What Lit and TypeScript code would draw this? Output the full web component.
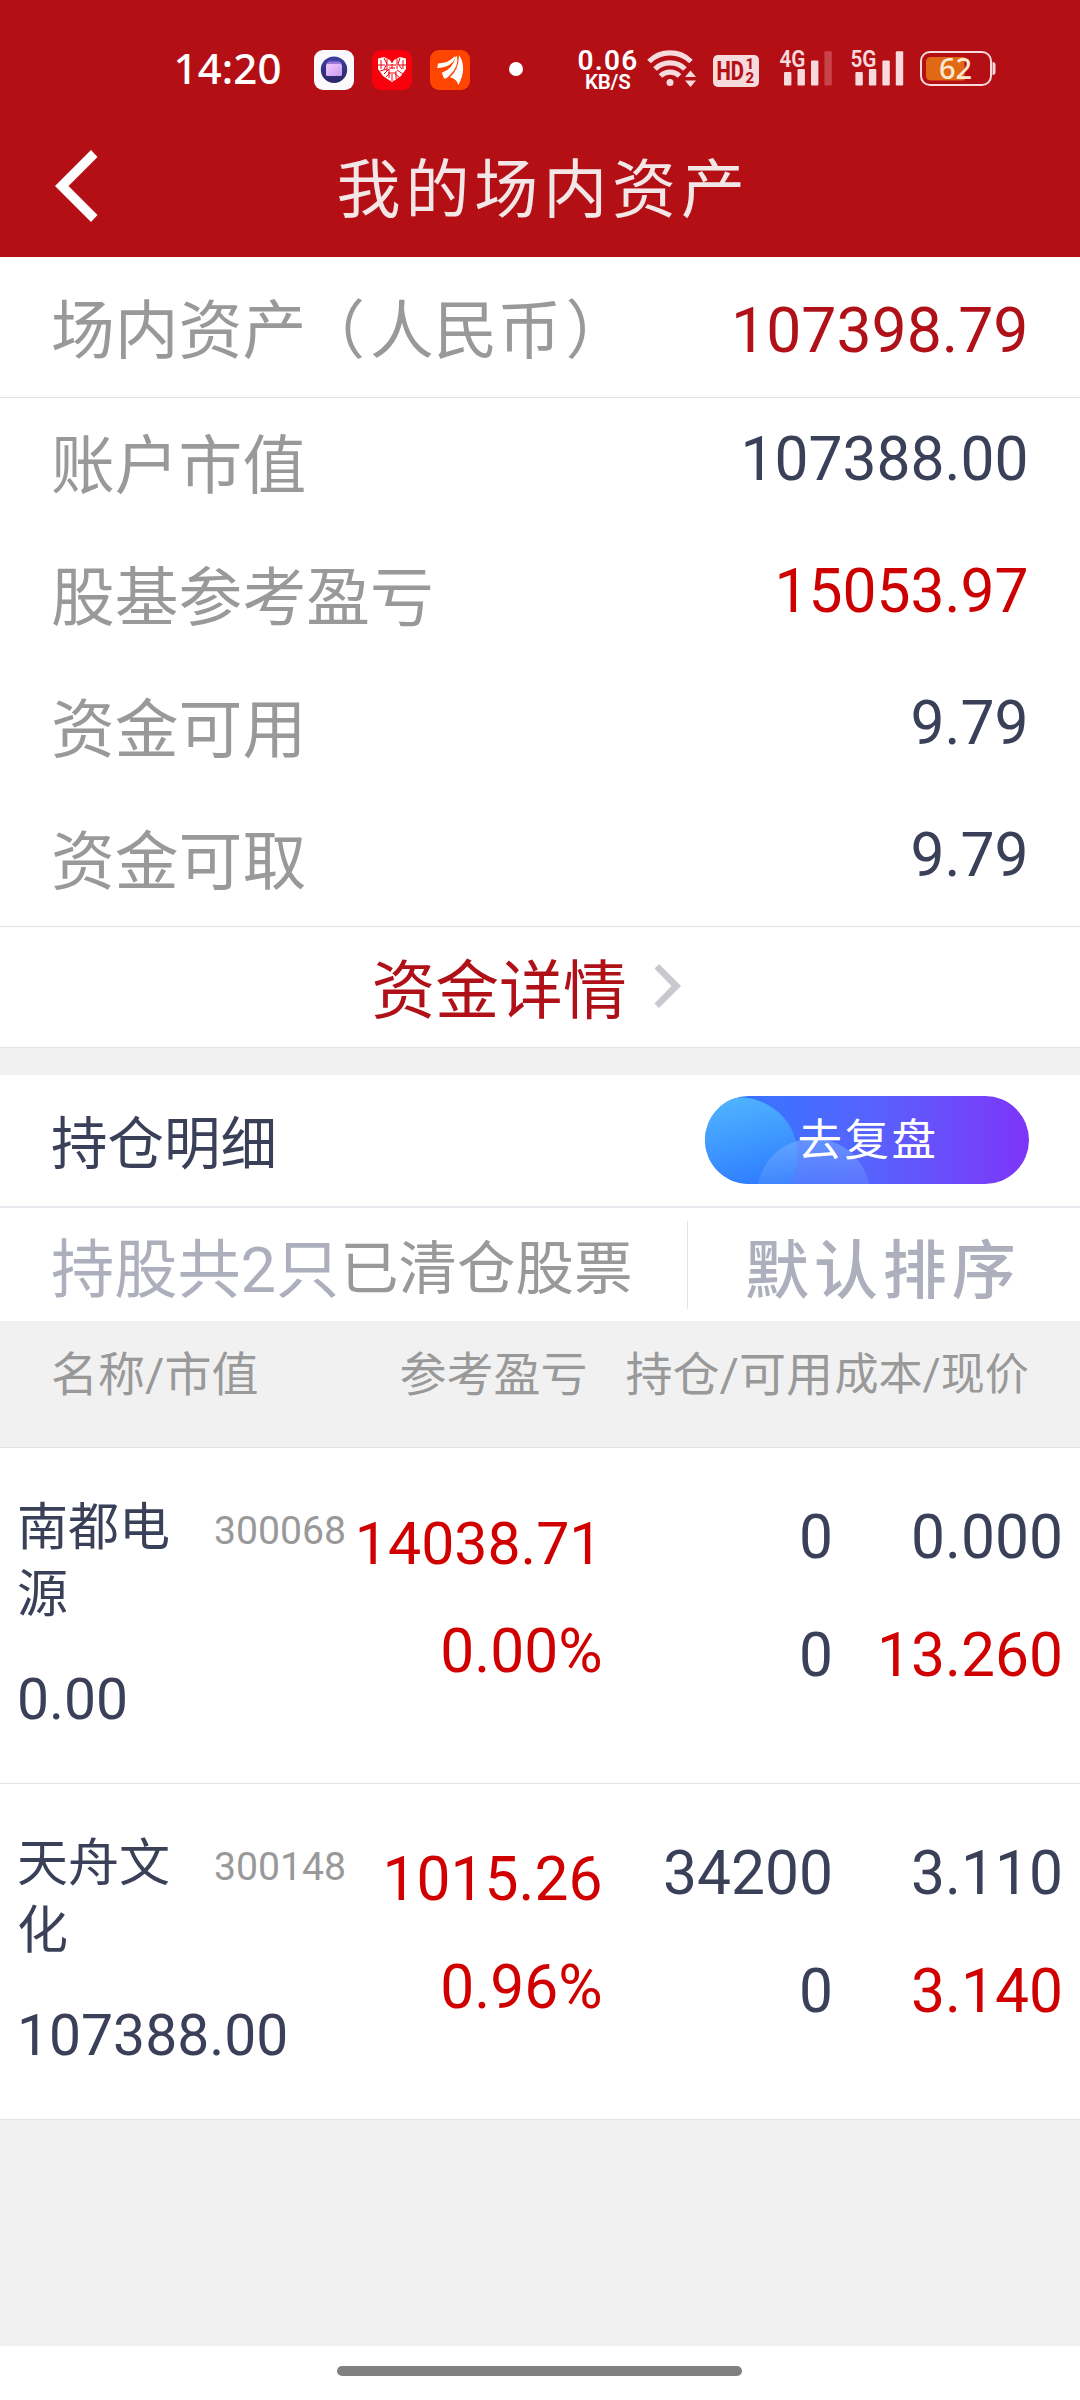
import { LitElement, html, css, svg } from "lit";
import { customElement, property } from "lit/decorators.js";

interface Holding {
  name: string;
  code: string;
  value: string;
  profit: string;
  rate: string;
  held: string;
  usable: string;
  cost: string;
  price: string;
  tight?: boolean;
}

const FONT = css`Roboto, "Noto Sans CJK SC", sans-serif`;

const SUMMARY = [
  { label: "账户市值", value: "107388.00", up: false },
  { label: "股基参考盈亏", value: "15053.97", up: true },
  { label: "资金可用", value: "9.79", up: false },
  { label: "资金可取", value: "9.79", up: false },
];

const HOLDINGS: Holding[] = [
  {
    name: "南都电源", code: "300068", value: "0.00", profit: "14038.71", rate: "0.00%",
    held: "0", usable: "0", cost: "0.000", price: "13.260", tight: true,
  },
  {
    name: "天舟文化", code: "300148", value: "107388.00", profit: "1015.26", rate: "0.96%",
    held: "34200", usable: "0", cost: "3.110", price: "3.140",
  },
];

@customElement("status-bar")
export class StatusBar extends LitElement {
  static styles = css`
    :host { display: block; height: 114px; }
    svg { display: block; }
    .os { font-family: "Noto Sans", sans-serif; fill: #fff; }
    .rb { font-family: Roboto, sans-serif; }
    .charge { fill: #fde9d2; }
  `;

  private bars(x: number, last: string) {
    return svg`
      <g fill="#f7dadc">
        <rect x=${x} y="72" width="7.4" height="13.6" rx="1"/>
        <rect x=${x + 13.5} y="69" width="7.4" height="16.6" rx="1"/>
        <rect x=${x + 27} y="60.5" width="7.4" height="25.1" rx="1"/>
        <rect x=${x + 40.4} y="51.3" width="7.4" height="34.3" rx="1" fill=${last}/>
      </g>`;
  }

  render() {
    return html`
      <svg width="1080" height="114" viewBox="0 0 1080 114">
        <defs>
          <linearGradient id="navy" x1="0" y1="0" x2="0" y2="1">
            <stop offset="0" stop-color="#3a3f9c"/><stop offset="1" stop-color="#2b2766"/>
          </linearGradient>
          <linearGradient id="pink" x1="0" y1="0" x2="1" y2="1">
            <stop offset="0" stop-color="#f3c8fb"/><stop offset="1" stop-color="#c79af0"/>
          </linearGradient>
        </defs>
        <text class="os" x="173.500" y="84" font-size="42" font-weight="500" textLength="108">14:20</text>

        <rect x="314" y="50" width="40" height="40" rx="9" fill="#fafafc"/>
        <circle cx="334" cy="69.7" r="13.2" fill="url(#navy)"/>
        <rect x="328" y="60.5" width="12" height="4" rx="1.5" fill="#6a55c0"/>
        <rect x="326.6" y="62" width="14.8" height="5" rx="1.5" fill="#9a78dc"/>
        <rect x="326" y="64" width="16" height="12" rx="1.5" fill="url(#pink)"/>

        <rect x="372" y="50" width="40" height="40" rx="9" fill="#f8000c"/>
        <path d="M378 58.5 L384 57 L390 60 L392 63.5 L394 60 L400 57 L406 58.5 V69 L401 76 L392 82 L383 76 L378 69Z" fill="#fff"/>
        <g stroke="#f8000c" stroke-width="1" fill="none">
          <path d="M381 60v9M384 58l3 6-3 5M387 59v12M378 65h7M380 71l7-2M384 74l5-5v9M388 73l8 0M392 74v7M396 71v8M397 70l6 4M397 59v10M400 58l-2 6 4 5M403 60v9M399 65h7M388 65h8M389 68h6M392 64v5M386 77l4-4M395 74l4 3"/>
        </g>

        <rect x="430" y="50" width="40" height="40" rx="9" fill="#ff4600"/>
        <path d="M438 67.5 L438.5 64 Q449 64 455 57 Q451 67 438 67.5Z
                 M442.5 73 Q453 70 456.5 56.5 Q458.500 66 449 75 Q446 78 444.500 78Z
                 M451 77 Q459 70 459.500 57 Q466 68 458.500 83.500 Q457 79 451 77Z" fill="#fff" stroke="#fff" stroke-width="1.200"/>

        <circle cx="516" cy="69" r="7" fill="#fff"/>

        <text class="rb" font-weight="600" fill="#fff"><tspan x="577.500" y="70" font-size="28" letter-spacing="1.300">0.06</tspan><tspan x="585" y="89" font-size="20.500" letter-spacing="-.2">KB/S</tspan></text>

        <g fill="none" stroke="#f7dadc" stroke-width="5.200">
          <path d="M649 61.500 A30 30 0 0 1 691 61.500"/>
          <path d="M655 69 A21.500 21.500 0 0 1 685 69"/>
          <path d="M660.500 76 A13.500 13.500 0 0 1 679.500 76"/>
        </g>
        <circle cx="670" cy="82.600" r="3.500" fill="#f7dadc"/>
        <path d="M685 77 L690.500 70.500 L696 77Z M685 80.500 H696 L690.500 87Z" fill="#f7dadc"/>

        <rect x="713" y="55" width="46" height="32" rx="5" fill="#f7dadc"/>
        <g class="rb" fill="#b50f16" font-weight="800">
          <text x="716.500" y="80" font-size="25" textLength="27.500" lengthAdjust="spacingAndGlyphs">HD</text>
          <text x="745.500" y="69" font-size="15">1</text>
          <text x="745.500" y="82.500" font-size="15">2</text>
        </g>

        <g class="rb" fill="#f7dadc" font-weight="600" font-size="24.500">
          <text x="779.500" y="66.500" textLength="26" lengthAdjust="spacingAndGlyphs">4G</text>
          <text x="850.500" y="66.500" textLength="26" lengthAdjust="spacingAndGlyphs">5G</text>
        </g>
        ${this.bars(784, "#c9434a")}
        ${this.bars(855.4, "#f7dadc")}

        <rect x="921" y="52" width="70" height="33" rx="9" fill="none" stroke="#f7dadc" stroke-width="2"/>
        <path d="M931 57 H964.500 V80.500 H931 Q926 80.500 926 75.500 V62 Q926 57 931 57Z" fill="#e06914"/>
        <path d="M992.500 62 Q995.500 62 995.500 65 V72 Q995.500 75 992.500 75Z" fill="#f7dadc"/>
        <text class="os charge" x="939" y="79" font-size="29" font-weight="500" textLength="33">62</text>
      </svg>`;
  }
}

@customElement("holding-row")
export class HoldingRow extends LitElement {
  @property({ attribute: false }) item!: Holding;

  static styles = css`
    :host {
      display: grid;
      grid-template-columns: 344px 258.500px 230.500px 230px 17px;
      height: 335px;
      border-bottom: 1px solid #e2e2e2;
      background: #fff;
      font-family: ${FONT};
      color: #3a4058;
      font-size: 60.5px;
      line-height: 60px;
      white-space: nowrap;
    }
    .ident { padding: 46px 0 0 17px; }
    .title { display: flex; align-items: flex-start; }
    .name { flex: none; width: 160px; font-size: 51px; line-height: 67px; white-space: normal; }
    .code { flex: none; font-size: 39.200px; line-height: 39px; color: #999; margin: 18px 0 0 37px; }
    .value { font-size: 57px; line-height: 57px; margin-top: 43px; }
    .col { display: flex; flex-direction: column; align-items: flex-end; padding-top: 60px; gap: 58px; }
    .pl { padding-top: 66px; gap: 48px; }
    .up { color: #d00000; }
    .tight { font-size: 59px; }
  `;

  render() {
    const h = this.item;
    return html`
      <div class="ident">
        <div class="title"><span class="name">${h.name}</span><span class="code">${h.code}</span></div>
        <div class="value">${h.value}</div>
      </div>
      <div class="col pl up"><span class=${h.tight ? "tight" : ""}>${h.profit}</span><span>${h.rate}</span></div>
      <div class="col"><span>${h.held}</span><span>${h.usable}</span></div>
      <div class="col"><span>${h.cost}</span><span class="up">${h.price}</span></div>
    `;
  }
}

@customElement("app-root")
export class AppRoot extends LitElement {
  static styles = css`
    :host {
      display: flex;
      flex-direction: column;
      width: 1080px;
      height: 2400px;
      overflow: hidden;
      background: #f1f1f1;
      font-family: ${FONT};
      color: #3a4058;
      white-space: nowrap;
    }
    svg { display: block; }
    .top { height: 257px; background: #b50f16; }
    .nav { display: grid; grid-template-columns: 336.500px 406px 1fr; height: 143px; }
    .back { margin: 36px 0 0 55px; }
    .title { font-size: 64px; line-height: 64px; letter-spacing: 4.9px; color: #f2e6e7; margin-top: 45px; }
    .row { display: flex; justify-content: space-between; align-items: flex-start; padding: 0 51.500px 0 51px; background: #fff; }
    .label { font-size: 63.8px; line-height: 64px; color: #999; }
    .open { margin: 0 5px 0 -5px; }
    .close { margin-left: 4px; }
    .num { font-size: 60.5px; line-height: 60px; }
    .total { height: 140px; border-bottom: 1px solid #e2e2e2; }
    .total .label { margin-top: 43px; }
    .total .num { font-size: 62.5px; line-height: 62px; margin-top: 42.500px; color: #b01118; }
    .summary { background: #fff; height: 529px; box-sizing: border-box; border-bottom: 1px solid #e2e2e2; }
    .summary .row { height: 132px; }
    .summary .label { margin-top: 37px; }
    .summary .num { margin-top: 31.500px; }
    .num.up { color: #cc0000; }
    .detail { display: flex; height: 121px; box-sizing: border-box; border-bottom: 1px solid #e2e2e2; background: #fff; padding-left: 371.500px; color: #b01118; }
    .detail span { font-size: 63.8px; line-height: 64px; margin-top: 33px; }
    .detail svg { margin: 37px 0 0 27px; }
    .section { height: 131px; margin-top: 27px; border-bottom: 2px solid #e6eaee; }
    .section .head { font-size: 56.500px; line-height: 57px; margin-top: 42px; }
    .review { position: relative; width: 324px; height: 88px; border-radius: 44px; overflow: hidden; margin-top: 21px; }
    .review .cap { position: absolute; left: 93px; top: 23px; font-size: 44.500px; line-height: 44px; letter-spacing: 2.500px; color: #fff; }
    .filters { display: flex; height: 113px; background: #fff; padding-left: 51px; color: #adafbd; }
    .held { font-size: 63.200px; line-height: 64px; margin-top: 30px; width: 289px; }
    .cleared { font-size: 58.500px; line-height: 59px; margin-top: 32px; width: 347px; color: #999; }
    .rule { width: 1px; height: 88px; margin-top: 13px; background: #e4e4e4; }
    .sort { font-size: 64px; line-height: 64px; letter-spacing: 4.9px; font-weight: 500; margin: 32px 0 0 57px; }
    .columns { display: grid; grid-template-columns: 399.500px 226px 208px 1fr; height: 127px; padding-top: 31px; box-sizing: border-box; border-bottom: 1px solid #e2e2e2; font-size: 47px; line-height: 46px; color: #999; }
    .columns .first { padding-left: 51px; }
    .columns .last { font-size: 44px; line-height: 44px; margin: 1px 0 0 1px; }
    .home { margin-top: auto; height: 54px; background: #fff; display: flex; }
    .pill { width: 405px; height: 10px; border-radius: 5px; background: #808080; margin: 20px 0 0 337px; }
  `;

  render() {
    return html`
      <header class="top">
        <status-bar></status-bar>
        <nav class="nav">
          <svg class="back" width="43" height="72" viewBox="0 0 43 72"><path d="M0 36 L36 0 L42.500 7 L13.500 36 L42.500 65 L36 72Z" fill="#fff"/></svg>
          <span class="title">我的场内资产</span>
        </nav>
      </header>
      <div class="row total"><span class="label">场内资产<span class="open">（</span>人民币<span class="close">）</span></span><span class="num">107398.79</span></div>
      <div class="summary">
        ${SUMMARY.map((s) => html`<div class="row"><span class="label">${s.label}</span><span class="num ${s.up ? "up" : ""}">${s.value}</span></div>`)}
      </div>
      <div class="detail">
        <span>资金详情</span>
        <svg width="28" height="44" viewBox="0 0 28 44"><path d="M5 0 L27 22 L5 44 L0.500 39.500 L17.500 22 L0.500 4.500Z" fill="#c8c8ce"/></svg>
      </div>
      <div class="row section">
        <span class="head">持仓明细</span>
        <div class="review">
          <svg width="324" height="88" viewBox="0 0 324 88">
            <defs>
              <linearGradient id="bg"><stop offset="0" stop-color="#2c7bff"/><stop offset=".5" stop-color="#5663fd"/><stop offset="1" stop-color="#7e35f8"/></linearGradient>
              <linearGradient id="c1" x1=".4" y1="0" x2=".6" y2=".85"><stop offset="0" stop-color="#50b4ff"/><stop offset="1" stop-color="#2b78ff"/></linearGradient>
              <linearGradient id="c2" x1="0" y1="0" x2="0" y2=".5"><stop offset="0" stop-color="#7fb4ff" stop-opacity=".55"/><stop offset="1" stop-color="#6fa0ff" stop-opacity=".2"/></linearGradient>
            </defs>
            <rect width="324" height="88" fill="url(#bg)"/>
            <circle cx="35" cy="59" r="57.500" fill="url(#c1)"/>
            <circle cx="108.500" cy="99" r="56.500" fill="url(#c2)"/>
          </svg>
          <span class="cap">去复盘</span>
        </div>
      </div>
      <div class="filters">
        <span class="held">持股共2只</span>
        <span class="cleared">已清仓股票</span>
        <i class="rule"></i>
        <span class="sort">默认排序</span>
      </div>
      <div class="columns">
        <span class="first">名称/市值</span><span>参考盈亏</span><span>持仓/可用</span><span class="last">成本/现价</span>
      </div>
      ${HOLDINGS.map((h) => html`<holding-row .item=${h}></holding-row>`)}
      <footer class="home"><div class="pill"></div></footer>
    `;
  }
}
